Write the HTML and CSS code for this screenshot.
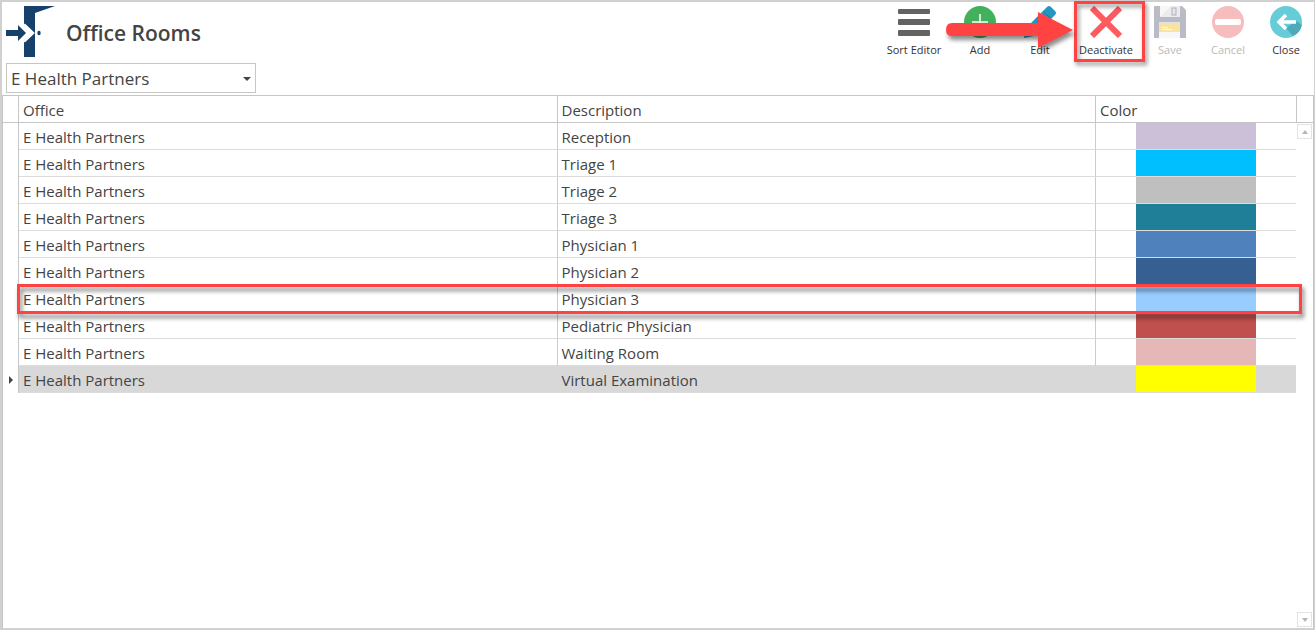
FILE: index.html
```html
<!DOCTYPE html>
<html lang="en">
<head>
  <meta charset="UTF-8">
  <meta name="viewport" content="width=device-width, initial-scale=1.0">
  <title>Office Rooms</title>
  <link rel="stylesheet" href="styles.css">
</head>
<body>
  <div class="window">
    <header class="header">
      <svg class="logo" viewBox="0 0 50 52" width="50" height="52">
        <path d="M18 0H49L29 7V51H18V34L26 27L18 20Z" fill="#17406d"/>
        <path d="M0 24H12V19L20 27L12 35V30H0Z" fill="#17406d"/>
        <path d="M18 18.500L27 27L18 35.500" fill="none" stroke="#fff" stroke-width="2.600"/>
        <ellipse cx="33" cy="27" rx="1.700" ry="2.300" fill="#17406d"/>
      </svg>
      <h1>Office Rooms</h1>

      <div class="toolbar">
        <button type="button" class="tool wide">
          <svg viewBox="0 0 32 32" width="32" height="32">
            <g fill="#636363">
              <rect y="3" width="32" height="5" rx="1"/>
              <rect y="13" width="32" height="6" rx="1"/>
              <rect y="24" width="32" height="6" rx="1"/>
            </g>
          </svg>
          Sort Editor
        </button>
        <button type="button" class="tool">
          <svg viewBox="0 0 32 32" width="32" height="32">
            <circle cx="16" cy="16" r="16" fill="#43b05c"/>
            <path d="M16 8V24M8 16H24" stroke="#fff" stroke-width="1.500"/>
          </svg>
          Add
        </button>
        <button type="button" class="tool">
          <svg viewBox="0 0 32 32" width="32" height="32">
            <path d="M2 22L17 7L25 15L10 30L0 32Z" fill="#2496c4"/>
            <path d="M6 26L21 11L25 15L10 30Z" fill="#1b7fa8"/>
            <path d="M17 7L23 1Q25 -1 27 1L31 5Q33 7 31 9L25 15Z" fill="#2496c4"/>
            <path d="M19 5L27 13" stroke="#1b7fa8" stroke-width="1"/>
          </svg>
          Edit
        </button>
        <button type="button" class="tool wide marked">
          <svg viewBox="0 0 32 32" width="32" height="32">
            <path d="M2 2L30 30M30 2L2 30" stroke="#ff5a5f" stroke-width="6"/>
          </svg>
          Deactivate
          <span class="mark-box"></span>
          <svg class="mark-arrow" viewBox="0 0 128 36" width="128" height="36">
            <path d="M7 11H93V0L128 18L93 36V24H7Q1 24 1 18Q1 11 7 11Z" fill="#ff4343"/>
          </svg>
        </button>
        <button type="button" class="tool narrow" disabled>
          <svg viewBox="0 0 32 32" width="32" height="32">
            <path d="M0 0H28L32 4V32H0Z" fill="#b9bcc7"/>
            <rect x="6" width="20" height="11" fill="#ececee"/>
            <path d="M6 11V0H17Z" fill="#f7f7f7"/>
            <rect x="18" y="2" width="4" height="7" fill="#e6e6e8" stroke="#aeb1bc"/>
            <rect x="5" y="16" width="21" height="16" fill="#f7f7f8"/>
            <rect x="5" y="16" width="21" height="10" fill="#f8e3a0"/>
            <rect x="5" y="16" width="21" height="2" fill="#dfe2e8"/>
            <path d="M8 21.500H14M8 23.500H18" stroke="#fffaf0" stroke-width="1"/>
          </svg>
          Save
        </button>
        <button type="button" class="tool" disabled>
          <svg viewBox="0 0 32 32" width="32" height="32">
            <circle cx="16" cy="16" r="16" fill="#f7bcbd"/>
            <rect x="3" y="13" width="26" height="6" rx="2" fill="#fff"/>
          </svg>
          Cancel
        </button>
        <button type="button" class="tool narrow">
          <svg viewBox="0 0 32 32" width="32" height="32">
            <circle cx="16" cy="16" r="16" fill="#66cdd8"/>
            <path d="M16 22L26 15L32 19A16 16 0 0 1 23 30Z" fill="#4caab9"/>
            <path d="M26 16H9M16 9L9 16L16 23" fill="none" stroke="#fff" stroke-width="3.500"/>
          </svg>
          Close
        </button>
      </div>
    </header>

    <div class="office-select">
      <select aria-label="Office">
        <option>E Health Partners</option>
      </select>
    </div>

    <main class="grid">
      <table>
        <colgroup>
          <col class="col-indicator">
          <col>
          <col>
          <col class="col-color">
        </colgroup>
        <thead>
          <tr><th></th><th>Office</th><th>Description</th><th>Color</th></tr>
        </thead>
        <tbody>
          <tr><td></td><td>E Health Partners</td><td>Reception</td><td><div class="swatch lilac"></div></td></tr>
          <tr><td></td><td>E Health Partners</td><td>Triage 1</td><td><div class="swatch sky"></div></td></tr>
          <tr><td></td><td>E Health Partners</td><td>Triage 2</td><td><div class="swatch silver"></div></td></tr>
          <tr><td></td><td>E Health Partners</td><td>Triage 3</td><td><div class="swatch teal"></div></td></tr>
          <tr><td></td><td>E Health Partners</td><td>Physician 1</td><td><div class="swatch blue"></div></td></tr>
          <tr><td></td><td>E Health Partners</td><td>Physician 2</td><td><div class="swatch navy"></div></td></tr>
          <tr class="marked"><td><div class="mark-row"></div></td><td>E Health Partners</td><td>Physician 3</td><td><div class="swatch light-blue"></div></td></tr>
          <tr><td></td><td>E Health Partners</td><td>Pediatric Physician</td><td><div class="swatch red"></div></td></tr>
          <tr><td></td><td>E Health Partners</td><td>Waiting Room</td><td><div class="swatch pink"></div></td></tr>
          <tr class="selected"><td><div class="pointer"></div></td><td>E Health Partners</td><td>Virtual Examination</td><td><div class="swatch yellow"></div></td></tr>
        </tbody>
      </table>
      <div class="scrollbar">
        <div class="scroll-head"></div>
        <button type="button" class="scroll-btn up" aria-label="Scroll up"></button>
        <button type="button" class="scroll-btn down" aria-label="Scroll down"></button>
      </div>
    </main>
  </div>
</body>
</html>
```
FILE: styles.css
```css
* {
  box-sizing: border-box;
}
body {
  margin: 0;
  font-family: "Open Sans", "Noto Sans", sans-serif;
  color: #444;
  background: #fff;
}
.window {
  display: flex;
  flex-direction: column;
  min-height: 100vh;
  border: 2px solid #d0d0d0;
  border-right-width: 1px;
}

/* Header */
.header {
  display: flex;
  align-items: flex-start;
  height: 61px;
  padding-left: 4px;
}
.logo {
  margin-top: 4px;
}
h1 {
  margin: 0 auto 0 10px;
  font-size: 21px;
  font-weight: 600;
  line-height: 62px;
}
.toolbar {
  display: flex;
}
.tool {
  display: flex;
  flex-direction: column;
  align-items: center;
  gap: 4px;
  width: 60px;
  padding: 4px 0 0;
  border: none;
  background: none;
  font-family: inherit;
  font-size: 11px;
  line-height: 16px;
  color: #333;
  white-space: nowrap;
}
.tool.wide {
  width: 72px;
}
.tool.narrow {
  width: 56px;
}
.tool:disabled {
  color: #b9b9b9;
}
.tool.marked {
  position: relative;
}
.mark-box {
  position: absolute;
  top: -1px;
  left: 4px;
  right: -3px;
  bottom: -4px;
  border: 3px solid #ff4343;
  filter: drop-shadow(2px 3px 2px rgba(0, 0, 0, 0.45));
}
.mark-arrow {
  position: absolute;
  top: 10px;
  right: calc(100% - 3px);
  filter: drop-shadow(2px 4px 2px rgba(0, 0, 0, 0.45));
}

/* Office drop-down */
.office-select {
  position: relative;
  width: 250px;
  margin: 0 0 2px 4px;
}
.office-select select {
  display: block;
  width: 100%;
  height: 30px;
  padding: 0 24px 0 4px;
  border: 1px solid #c6c6c6;
  border-radius: 0;
  appearance: none;
  background: #fff;
  font-family: inherit;
  font-size: 17px;
  color: #444;
}
.office-select::after {
  content: "";
  position: absolute;
  top: 14px;
  right: 5px;
  border: 4px solid transparent;
  border-top-color: #444;
  border-bottom: none;
  pointer-events: none;
}

/* Rooms grid */
.grid {
  display: flex;
  flex: 1;
  border: 1px solid #c6c6c6;
  border-bottom: none;
}
table {
  flex: 1;
  align-self: flex-start;
  table-layout: fixed;
  width: 100%;
  border-collapse: separate;
  border-spacing: 0;
  font-size: 15px;
  line-height: 24px;
}
.col-indicator {
  width: 16px;
}
.col-color {
  width: 200px;
}
th,
td {
  height: 27px;
  padding: 2px 0 0 4px;
  border-right: 1px solid #c5cdd8;
  border-bottom: 1px solid #dcdcdc;
  text-align: left;
  font-weight: normal;
  white-space: nowrap;
}
th {
  border-color: #c6c6c6;
}
th:last-child {
  border-right: none;
}
td:first-child {
  padding: 0;
  border-right-color: #c6c6c6;
  border-bottom: none;
}
td:last-child {
  padding: 0 40px;
  border-right: none;
}
.selected td:not(:first-child) {
  background: #d8d8d8;
  border-right-color: #d8d8d8;
}
.pointer {
  width: 0;
  margin-left: 6px;
  border: 4px solid transparent;
  border-left-color: #444;
  border-right: none;
}
tr.marked {
  position: relative;
}
.mark-row {
  position: absolute;
  top: -1px;
  left: 14px;
  right: -6px;
  bottom: -2px;
  border: 3px solid #ff4343;
  filter: drop-shadow(2px 4px 2px rgba(0, 0, 0, 0.5));
}

.swatch {
  height: 26px;
}
.lilac { background: #ccc0d9; }
.sky { background: #00bfff; }
.silver { background: #bfbfbf; }
.teal { background: #1f7f99; }
.blue { background: #4f81bd; }
.navy { background: #366092; }
.light-blue { background: #99ccff; }
.red { background: #c0504d; }
.pink { background: #e5b8b7; }
.yellow { background: #ffff00; }

/* Scroll bar */
.scrollbar {
  display: flex;
  flex-direction: column;
  flex: none;
  width: 17px;
}
.scroll-head {
  height: 27px;
  margin-bottom: 1px;
  border-left: 1px solid #c6c6c6;
  border-bottom: 1px solid #c6c6c6;
}
.scroll-btn {
  display: flex;
  align-items: center;
  justify-content: center;
  width: 15px;
  height: 15px;
  margin-left: 1px;
  padding: 0;
  border: 1px solid #e3e3e3;
  background: #fff;
}
.scroll-btn::before {
  content: "";
  border: 3px solid transparent;
}
.scroll-btn.up::before {
  border-top: none;
  border-bottom: 4px solid #b5b5b5;
}
.scroll-btn.down {
  margin-top: auto;
  margin-bottom: 1px;
}
.scroll-btn.down::before {
  border-bottom: none;
  border-top: 4px solid #b5b5b5;
}
```
